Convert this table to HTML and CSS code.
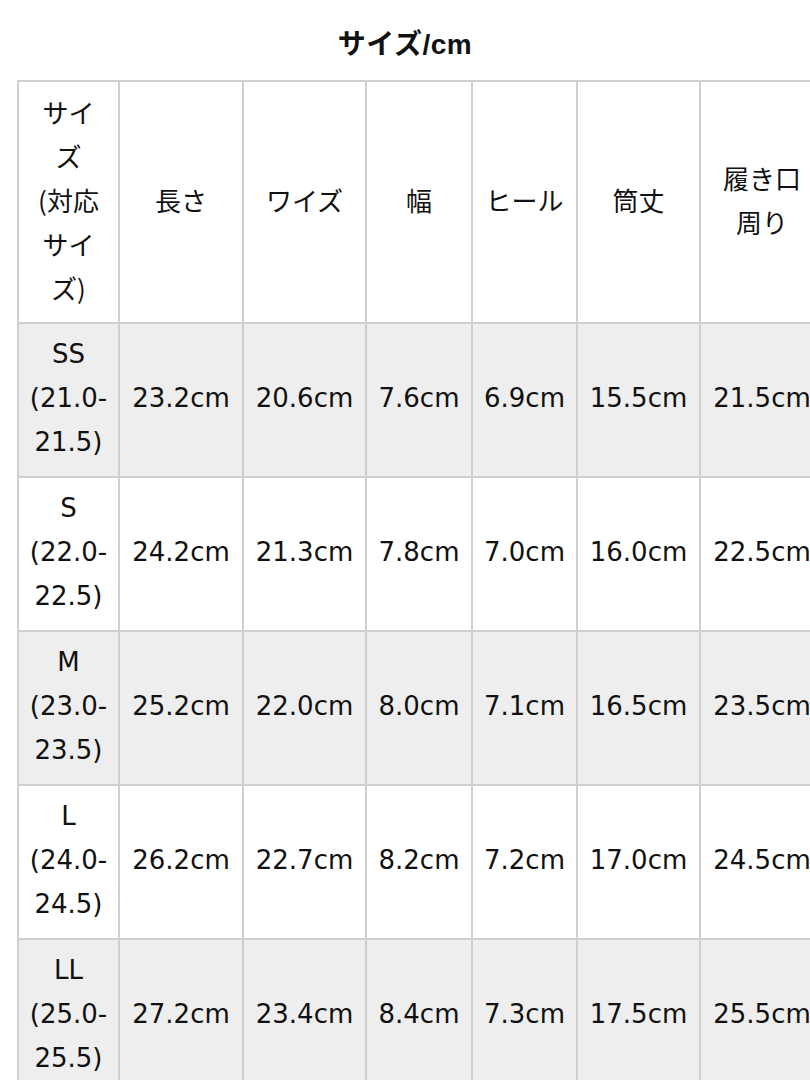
FILE: index.html
```html
<!DOCTYPE html>
<html lang="ja">
<head>
<meta charset="utf-8">
<link rel="stylesheet" href="styles.css">
</head>
<body>
<div class="page">
  <h1 class="title">サイズ/cm</h1>
  <table class="size-table">
    <colgroup>
      <col class="c1"><col class="c2"><col class="c3"><col class="c4"><col class="c5"><col class="c6"><col class="c7">
    </colgroup>
    <thead>
      <tr class="head">
        <th>サイ<br>ズ<br>(対応<br>サイ<br>ズ)</th>
        <th>長さ</th>
        <th>ワイズ</th>
        <th>幅</th>
        <th>ヒール</th>
        <th>筒丈</th>
        <th>履き口<br>周り</th>
      </tr>
    </thead>
    <tbody>
      <tr class="alt">
        <td>SS<br>(21.0-<br>21.5)</td><td>23.2cm</td><td>20.6cm</td><td>7.6cm</td><td>6.9cm</td><td>15.5cm</td><td>21.5cm</td>
      </tr>
      <tr>
        <td>S<br>(22.0-<br>22.5)</td><td>24.2cm</td><td>21.3cm</td><td>7.8cm</td><td>7.0cm</td><td>16.0cm</td><td>22.5cm</td>
      </tr>
      <tr class="alt">
        <td>M<br>(23.0-<br>23.5)</td><td>25.2cm</td><td>22.0cm</td><td>8.0cm</td><td>7.1cm</td><td>16.5cm</td><td>23.5cm</td>
      </tr>
      <tr>
        <td>L<br>(24.0-<br>24.5)</td><td>26.2cm</td><td>22.7cm</td><td>8.2cm</td><td>7.2cm</td><td>17.0cm</td><td>24.5cm</td>
      </tr>
      <tr class="alt">
        <td>LL<br>(25.0-<br>25.5)</td><td>27.2cm</td><td>23.4cm</td><td>8.4cm</td><td>7.3cm</td><td>17.5cm</td><td>25.5cm</td>
      </tr>
    </tbody>
  </table>
</div>
</body>
</html>
```

FILE: styles.css
```css
html, body {
  margin: 0;
  padding: 0;
  background: #ffffff;
}
body {
  width: 810px;
  height: 1080px;
  overflow: hidden;
  font-family: "Noto Sans CJK JP", sans-serif;
  color: #111111;
}
.page {
  padding-left: 17px;
}
.title {
  margin: 0 0 13px -17px;
  padding-top: 23px;
  font-size: 28px;
  line-height: 44px;
  height: 44px;
  font-weight: bold;
  text-align: center;
  width: 810px;
  letter-spacing: 0.5px;
  font-family: "Liberation Sans", "Noto Sans CJK JP", sans-serif;
}
.size-table {
  border-collapse: collapse;
  table-layout: fixed;
  width: 806px;
}
.size-table th,
.size-table td {
  border: 2px solid #cfcfcf;
  padding: 8px 0 12px;
  text-align: center;
  vertical-align: middle;
  font-weight: normal;
  white-space: nowrap;
  overflow: visible;
  line-height: 44px;
}
.size-table th {
  font-family: "Noto Sans CJK JP", sans-serif;
  font-size: 26px;
}
.size-table td {
  font-family: "DejaVu Sans", "Noto Sans CJK JP", sans-serif;
  font-size: 26px;
}
.c1 { width: 101px; }
.c2 { width: 124px; }
.c3 { width: 123px; }
.c4 { width: 106px; }
.c5 { width: 105px; }
.c6 { width: 123px; }
.c7 { width: 124px; }
.alt td {
  background: #eeeeee;
}
```
